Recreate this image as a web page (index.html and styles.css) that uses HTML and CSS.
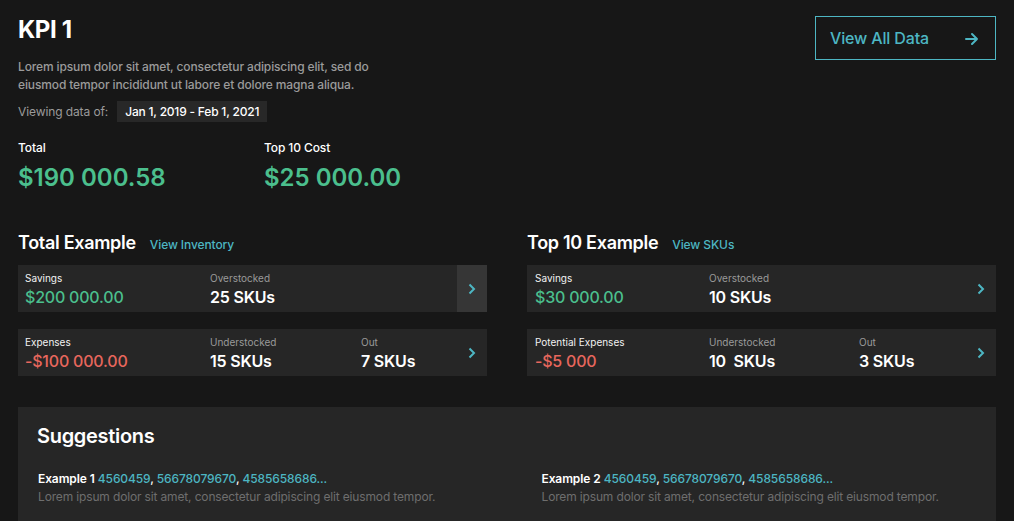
FILE: index.html
```html
<!DOCTYPE html>
<html>
<head>
<meta charset="utf-8">
<link rel="stylesheet" href="styles.css">
</head>
<body>
<div class="page">
  <header class="head">
    <div class="intro">
      <h1 class="title">KPI 1</h1>
      <p class="desc">Lorem ipsum dolor sit amet, consectetur adipiscing elit, sed do<br>eiusmod tempor incididunt ut labore et dolore magna aliqua.</p>
      <div class="viewing">
        <span class="viewing-label">Viewing data of:</span>
        <span class="chip">Jan 1, 2019 - Feb 1, 2021</span>
      </div>
    </div>
    <a class="btn" href="#">
      <span>View All Data</span>
      <svg class="btn-arrow" width="14" height="14" viewBox="0 0 14 14"><path d="M1 7h11M7 2l5 5-5 5" fill="none" stroke="currentColor" stroke-width="2" stroke-linecap="round" stroke-linejoin="round"/></svg>
    </a>
  </header>

  <section class="totals">
    <div class="total">
      <div class="total-label">Total</div>
      <div class="total-value">$190 000.58</div>
    </div>
    <div class="total">
      <div class="total-label">Top 10 Cost</div>
      <div class="total-value">$25 000.00</div>
    </div>
  </section>

  <section class="columns">
    <div class="col">
      <div class="col-head">
        <h2 class="col-title">Total Example</h2>
        <a class="link" href="#">View Inventory</a>
      </div>
      <div class="card">
        <div class="cell"><div class="lbl">Savings</div><div class="val green">$200 000.00</div></div>
        <div class="cell"><div class="lbl muted">Overstocked</div><div class="val">25 SKUs</div></div>
        <div class="cell"></div>
        <div class="chev hover"><svg width="8" height="12" viewBox="0 0 8 12"><path d="M1.5 1.5l4.5 4.5-4.5 4.5" fill="none" stroke="currentColor" stroke-width="2"/></svg></div>
      </div>
      <div class="card">
        <div class="cell"><div class="lbl">Expenses</div><div class="val red">-$100 000.00</div></div>
        <div class="cell"><div class="lbl muted">Understocked</div><div class="val">15 SKUs</div></div>
        <div class="cell"><div class="lbl muted">Out</div><div class="val">7 SKUs</div></div>
        <div class="chev"><svg width="8" height="12" viewBox="0 0 8 12"><path d="M1.5 1.5l4.5 4.5-4.5 4.5" fill="none" stroke="currentColor" stroke-width="2"/></svg></div>
      </div>
    </div>
    <div class="col">
      <div class="col-head">
        <h2 class="col-title">Top 10 Example</h2>
        <a class="link" href="#">View SKUs</a>
      </div>
      <div class="card right">
        <div class="cell"><div class="lbl">Savings</div><div class="val green">$30 000.00</div></div>
        <div class="cell"><div class="lbl muted">Overstocked</div><div class="val">10 SKUs</div></div>
        <div class="cell"></div>
        <div class="chev"><svg width="8" height="12" viewBox="0 0 8 12"><path d="M1.5 1.5l4.5 4.5-4.5 4.5" fill="none" stroke="currentColor" stroke-width="2"/></svg></div>
      </div>
      <div class="card right">
        <div class="cell"><div class="lbl">Potential Expenses</div><div class="val red">-$5 000</div></div>
        <div class="cell"><div class="lbl muted">Understocked</div><div class="val">10&nbsp; SKUs</div></div>
        <div class="cell"><div class="lbl muted">Out</div><div class="val">3 SKUs</div></div>
        <div class="chev"><svg width="8" height="12" viewBox="0 0 8 12"><path d="M1.5 1.5l4.5 4.5-4.5 4.5" fill="none" stroke="currentColor" stroke-width="2"/></svg></div>
      </div>
    </div>
  </section>

  <section class="suggest">
    <h2 class="suggest-title">Suggestions</h2>
    <div class="suggest-grid">
      <div class="item">
        <div class="item-head"><b>Example 1</b> <a href="#">4560459</a>, <a href="#">56678079670</a>, <a href="#">4585658686...</a></div>
        <div class="item-desc">Lorem ipsum dolor sit amet, consectetur adipiscing elit eiusmod tempor.</div>
      </div>
      <div class="item">
        <div class="item-head"><b>Example 2</b> <a href="#">4560459</a>, <a href="#">56678079670</a>, <a href="#">4585658686...</a></div>
        <div class="item-desc">Lorem ipsum dolor sit amet, consectetur adipiscing elit eiusmod tempor.</div>
      </div>
    </div>
  </section>
</div>
</body>
</html>
```

FILE: styles.css
```css
* { box-sizing: border-box; }
html, body {
  margin: 0;
  background: #171717;
  color: #ffffff;
  font-family: Inter, "Noto Sans", sans-serif;
  height: 100%;
  overflow: hidden;
}
a { text-decoration: none; color: #4db6c3; }
.page { padding: 16px 18px 0 18px; }

.head {
  display: flex;
  justify-content: space-between;
  align-items: flex-start;
}
.title {
  margin: 0;
  font-size: 24px;
  line-height: 28px;
  font-weight: 700;
  letter-spacing: -0.4px;
}
.desc {
  margin: 14px 0 0 0;
  font-size: 12px;
  line-height: 18px;
  font-weight: 500;
  color: #9b9b9b;
  letter-spacing: -0.13px;
}
.viewing {
  margin-top: 7px;
  display: flex;
  align-items: center;
  gap: 9px;
}
.viewing-label { font-size: 12px; color: #9b9b9b; letter-spacing: -0.1px; }
.chip {
  background: #282828;
  color: #ffffff;
  font-size: 12px;
  font-weight: 500;
  line-height: 21px;
  padding: 0 8px;
  letter-spacing: -0.2px;
}
.btn {
  width: 181px;
  height: 44px;
  border: 1px solid #4db6c3;
  display: flex;
  align-items: center;
  justify-content: space-between;
  padding: 0 16px 0 14px;
  font-size: 16px;
  font-weight: 500;
  color: #4db6c3;
  letter-spacing: -0.15px;
}
.btn-arrow { margin-top: 1px; }

.totals {
  display: flex;
  margin-top: 19px;
}
.total { width: 246px; }
.total-label {
  font-size: 12px;
  line-height: 14px;
  font-weight: 500;
  letter-spacing: -0.1px;
}
.total-value {
  margin-top: 8px;
  font-size: 24px;
  line-height: 30px;
  font-weight: 600;
  color: #4bbf8d;
}

.columns {
  display: grid;
  grid-template-columns: 1fr 1fr;
  column-gap: 40px;
  margin-top: 38px;
}
.col-head {
  display: flex;
  align-items: baseline;
  gap: 14px;
  margin-bottom: 10px;
}
.col-title {
  margin: 0;
  font-size: 18px;
  line-height: 24px;
  font-weight: 600;
  letter-spacing: -0.3px;
}
.link { font-size: 12px; font-weight: 500; letter-spacing: -0.1px; }

.card {
  display: grid;
  grid-template-columns: 185px 151px 1fr 30px;
  background: #262626;
  height: 47px;
  margin-bottom: 17px;
  padding-left: 7px;
}
.card.right {
  grid-template-columns: 174px 150px 1fr 30px;
  padding-left: 8px;
}
.cell { padding-top: 6px; }
.lbl {
  font-size: 10px;
  line-height: 14px;
  color: #f2f2f2;
}
.lbl.muted { color: #9a9a9a; }
.val {
  margin-top: 1px;
  font-size: 16px;
  line-height: 22px;
  font-weight: 600;
  letter-spacing: -0.2px;
}
.val.green { color: #4bbf8d; font-weight: 500; }
.val.red { color: #e8675d; font-weight: 500; }
.chev {
  display: flex;
  align-items: center;
  justify-content: center;
  color: #4db6c3;
}
.chev.hover { background: #363636; }

.suggest {
  margin-top: 14px;
  background: #262626;
  padding: 17px 19px 30px 19px;
}
.suggest-title {
  margin: 0;
  font-size: 20px;
  line-height: 24px;
  font-weight: 600;
  letter-spacing: -0.3px;
}
.suggest-grid {
  margin-top: 22px;
  display: grid;
  grid-template-columns: 1fr 1fr;
  column-gap: 68px;
  padding-left: 1px;
}
.item-head {
  font-size: 12px;
  line-height: 18px;
  font-weight: 500;
  color: #ffffff;
  letter-spacing: -0.1px;
}
.item-head b { font-weight: 600; }
.item-desc {
  font-size: 12px;
  line-height: 18px;
  color: #6e6e6e;
  letter-spacing: -0.15px;
}
```
